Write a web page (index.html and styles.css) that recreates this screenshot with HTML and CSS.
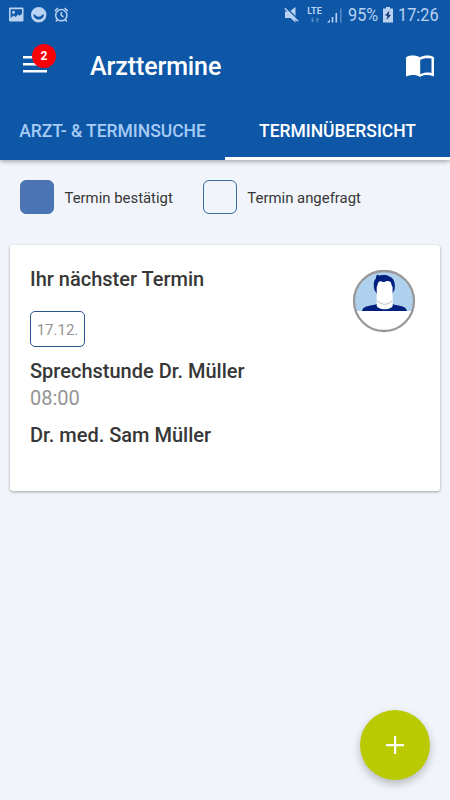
FILE: index.html
```html
<!DOCTYPE html>
<html lang="de">
<head>
    <meta charset="UTF-8">
    <meta name="viewport" content="width=device-width, initial-scale=1.0">
    <title>Arzttermine</title>
    <link rel="stylesheet" href="styles.css">
</head>
<body>
    <header>
        <div class="status-bar">
            <svg class="status-left" width="62" height="16" viewBox="0 0 62 16">
                <path fill-rule="evenodd" d="M2 0.5h12.500a1 1 0 0 1 1 1v12a1 1 0 0 1-1 1h-12.500a1 1 0 0 1-1-1v-12a1 1 0 0 1 1-1zM2.600 2.200v8.800l3-2.500 2 1.500 2.400-2.500 1.500 1.300 2.500-2v-4.600z"/>
                <circle cx="5.500" cy="5.300" r="1.500"/>
                <path fill-rule="evenodd" d="M30.700 0a7.700 7.700 0 1 1 0 15.400a7.700 7.700 0 0 1 0-15.400zM25.300 7.500c.8 6.700 10 6.700 10.800 0l-1.900.2c-1.500 2.600-5.500 2.600-7 0z"/>
                <g class="line" stroke-width="1.500">
                    <circle cx="53.300" cy="8.200" r="5.600"/>
                    <path d="M53.300 5v3.400l2.200 1.500M46.800 4l3.200-3M59.800 4l-3.200-3M49.500 12.500l-1.700 2M57.100 12.500l1.700 2"/>
                </g>
            </svg>
            <div class="status-right">
                <svg class="mute" width="16" height="16" viewBox="0 0 16 16">
                    <path d="M1 4.500h4.500l6-4.500v15.500l-5-4.500h-5.500z"/>
                    <path class="slash-gap" d="M1.500 0L15.500 14"/>
                    <path class="line" stroke-width="1.600" d="M.8 1.200l13.200 13"/>
                </svg>
                <div class="network">
                    <span>LTE</span>
                    <svg width="10" height="6" viewBox="0 0 10 6">
                        <path d="M2.500 5.500L.5 3h1.300V.5h1.400V3h1.300zM7.500.5l2 2.500H8.200v2.500H6.800V3H5.500z"/>
                    </svg>
                </div>
                <svg class="signal" width="16" height="15" viewBox="0 0 16 15">
                    <path d="M0 14.500l3-3v3zM4.700 9h1.600v5.500H4.700zM8.500 5h1.600v9.500H8.500z"/>
                    <path class="faint" d="M13 .5h1.600v14H13z"/>
                </svg>
                <span class="battery-level">95%</span>
                <svg class="battery" width="10" height="16" viewBox="0 0 10 16">
                    <path d="M3 0h4v1.500h2.500q.5 0 .5.500v13q0 .5-.5.500h-9q-.5 0-.5-.5v-13q0-.5.5-.5H3z"/>
                    <path class="bolt" d="M6.500 3.500L2 8.500l2.500.3L3.500 13 8 7.900l-2.500-.3z"/>
                </svg>
                <span class="time">17:26</span>
            </div>
        </div>

        <div class="app-bar">
            <div class="menu">
                <svg width="24" height="18" viewBox="0 0 24 18">
                    <path d="M0 0h24v2.500H0zM0 7h24v2.500H0zM0 14h24v2.500H0z"/>
                </svg>
                <span class="badge">2</span>
            </div>
            <h1>Arzttermine</h1>
            <svg class="book" width="28" height="23" viewBox="0 0 28 23">
                <path d="M14 2.300C10.500.2 4.500 0 .8 1.700Q0 2.100 0 3V20.500q0 1.100 1 .8C5 19.500 10.500 19.700 14 22 17.500 19.700 23 19.500 27 21.300q1 .3 1-.8V3q0-.9-.8-1.300C23.500 0 17.500.2 14 2.300z"/>
                <path class="page" d="M14.200 4.800C17 3.100 21.500 2.700 25.500 3.600V18C21.500 17.200 17.500 17.500 14.200 19.300z"/>
            </svg>
        </div>

        <nav>
            <a class="tab" href="#suche">ARZT- &amp; TERMINSUCHE</a>
            <a class="tab active" href="#termine">TERMINÜBERSICHT</a>
        </nav>
    </header>

    <main>
        <div class="legend">
            <div class="legend-item"><span class="box filled"></span><span>Termin bestätigt</span></div>
            <div class="legend-item"><span class="box"></span><span>Termin angefragt</span></div>
        </div>

        <section class="card">
            <div class="details">
                <h2>Ihr nächster Termin</h2>
                <div class="date">17.12.</div>
                <h3>Sprechstunde Dr. Müller</h3>
                <p class="hour">08:00</p>
                <h3 class="doctor">Dr. med. Sam Müller</h3>
            </div>
            <svg class="avatar" width="64" height="64" viewBox="0 0 64 64">
                <circle cx="32" cy="32" r="30" fill="#fff"/>
                <path fill="#afd1ee" d="M3.500 42A30 30 0 1 1 60.500 42z"/>
                <path fill="#001f7e" d="M10 42C11 36.500 18 37 25 35h15c7 2 14 1.500 15 7z"/>
                <path fill="#fff" d="M24.700 28h16v8.500c-1 5-15 5-16 0z"/>
                <path fill="#001f7e" d="M22.500 21C21 15 22 11 24 9.500 23.500 7.500 25 6 25.500 5.500 27 7.500 28.500 5.500 33 6 36 6.200 37 7.500 38.500 8 42.500 10 43.500 15 42.500 21L40 25H25z"/>
                <path fill="#fff" d="M24.700 18C26 16 25.500 13 28 12.300 29.500 11.700 31 13.300 32.500 13 34 11.800 37 11.700 38.500 13 39.500 14 39.300 16.500 40.600 18V28C40.600 33 36 36 32.700 36S24.700 33 24.700 28z"/>
                <path fill="none" stroke="#b9bcc0" d="M25.300 31.500C29 36.500 36.500 36.500 40 31.500"/>
                <circle cx="32" cy="32" r="30" fill="none" stroke="#999" stroke-width="2.300"/>
            </svg>
        </section>
    </main>

    <button class="add" aria-label="Neuer Termin">
        <svg width="18" height="18" viewBox="0 0 18 18">
            <path d="M8 0h2.200v8H18v2.200h-7.800V18H8v-7.800H0V8h8z"/>
        </svg>
    </button>
</body>
</html>
```

FILE: styles.css
```css
* {
    box-sizing: border-box;
}

body {
    font-family: Roboto, Arial, sans-serif;
    margin: 0;
    min-height: 800px;
    background: #f1f5fb;
    color: #373737;
}

header {
    height: 160px;
    background: #0e57a7;
    color: white;
    box-shadow: 0 1px 5px rgba(0, 0, 0, 0.4);
}

svg {
    display: block;
    fill: currentColor;
    flex-shrink: 0;
}

.status-bar {
    height: 30px;
    padding: 0 10px 0 8px;
    display: flex;
    justify-content: space-between;
    align-items: center;
    color: #b9d2f2;
}

.status-right {
    display: flex;
    align-items: center;
}

.line {
    fill: none;
    stroke: currentColor;
}

.slash-gap {
    fill: none;
    stroke: #0e57a7;
    stroke-width: 1.5px;
}

.faint {
    opacity: 0.4;
}

.bolt {
    fill: #123b70;
}

.network {
    width: 17px;
    margin-left: 6px;
    font-size: 9px;
    line-height: 9px;
    font-weight: bold;
    display: flex;
    flex-direction: column;
    align-items: center;
}

.network svg {
    margin-top: 1px;
    opacity: 0.4;
}

.signal {
    margin-left: 4px;
}

.battery-level,
.time {
    font-size: 18.5px;
    line-height: 30px;
    transform: scaleX(0.88);
    transform-origin: left;
}

.battery-level {
    width: 30px;
    margin-left: 5px;
}

.battery {
    margin-left: 5px;
}

.time {
    width: 42px;
    margin-left: 5px;
}

.app-bar {
    height: 72px;
    padding: 0 16px 0 23px;
    display: flex;
    align-items: center;
}

.menu {
    position: relative;
    width: 24px;
    margin-top: -2px;
}

.badge {
    position: absolute;
    left: 9px;
    top: -12px;
    width: 24px;
    height: 24px;
    border-radius: 50%;
    background: #fb0007;
    font-size: 12px;
    line-height: 25px;
    font-weight: bold;
    text-align: center;
}

h1 {
    flex: 1;
    margin: 0 0 0 43px;
    font-size: 25px;
    font-weight: 500;
    letter-spacing: -0.1px;
}

.page {
    fill: #0e57a7;
}

nav {
    height: 58px;
    display: flex;
}

.tab {
    flex: 1;
    padding-top: 1px;
    border-bottom: 3px solid transparent;
    color: #a6cbf5;
    font-size: 17.5px;
    line-height: 56px;
    font-weight: 500;
    letter-spacing: -0.03px;
    text-align: center;
    text-decoration: none;
    white-space: nowrap;
}

.tab.active {
    color: white;
    border-bottom-color: white;
}

.legend {
    display: flex;
    gap: 30px;
    padding: 20px 20px 0;
}

.legend-item {
    display: flex;
    align-items: center;
    font-size: 14.9px;
    line-height: 18px;
}

.legend-item span:last-child {
    padding-top: 2px;
}

.box {
    width: 34px;
    height: 34px;
    margin-right: 10.5px;
    border: 1px solid #3d6d9e;
    border-radius: 6px;
}

.box.filled {
    background: #4b74b4;
    border-color: #4b74b4;
}

.card {
    display: flex;
    justify-content: space-between;
    height: 246px;
    margin: 31px 10px 0;
    padding: 22px 24px 0 20px;
    background: white;
    border-radius: 3px;
    box-shadow: 0 1px 3px rgba(0, 0, 0, 0.35);
}

.card h2,
.card h3 {
    margin: 0;
    font-size: 20px;
    line-height: 24px;
    font-weight: 500;
}

.date {
    width: 55px;
    height: 36px;
    margin: 20px 0 12px;
    border: 1px solid #2b5590;
    border-radius: 5px;
    color: #949494;
    font-size: 15px;
    line-height: 36px;
    text-align: center;
}

.hour {
    margin: 3px 0 0;
    color: #949494;
    font-size: 20px;
    line-height: 24px;
}

.card .doctor {
    margin-top: 13px;
}

.avatar {
    margin-top: 2px;
}

.add {
    position: fixed;
    right: 20px;
    bottom: 20px;
    width: 70px;
    height: 70px;
    display: flex;
    justify-content: center;
    align-items: center;
    padding: 0;
    border: 0;
    border-radius: 50%;
    background: #b9ca00;
    color: white;
    box-shadow: 0 4px 9px rgba(0, 0, 0, 0.25);
}
```
